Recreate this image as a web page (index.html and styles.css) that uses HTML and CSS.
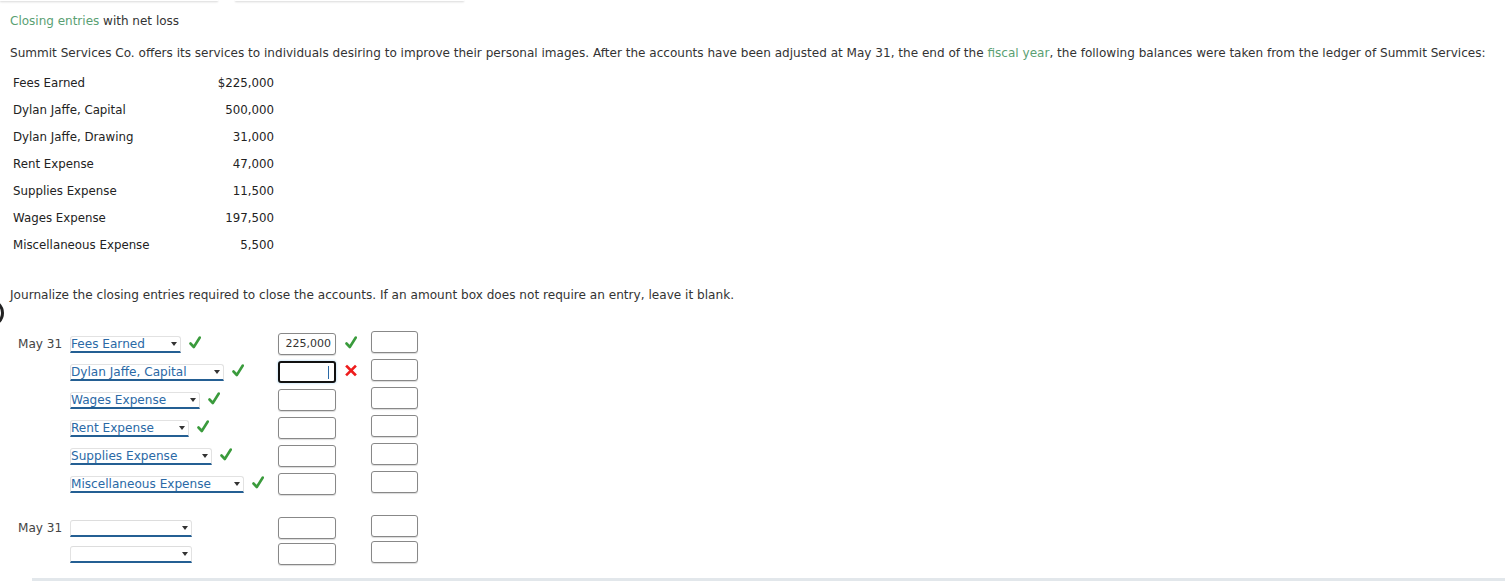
FILE: index.html
```html
<!DOCTYPE html>
<html>
<head>
<meta charset="utf-8">
<link rel="stylesheet" href="styles.css">
</head>
<body>
<div class="tabs"><div class="tab tab1"></div><div class="tab tab2"></div></div>
<div class="page">
  <p class="title"><span class="green">Closing entries</span> with net loss</p>
  <p class="intro">Summit Services Co. offers its services to individuals desiring to improve their personal images. After the accounts have been adjusted at May 31, the end of the <span class="green">fiscal year</span>, the following balances were taken from the ledger of Summit Services:</p>
  <table class="bal">
    <tr><td class="lbl">Fees Earned</td><td class="amt">$225,000</td></tr>
    <tr><td class="lbl">Dylan Jaffe, Capital</td><td class="amt">500,000</td></tr>
    <tr><td class="lbl">Dylan Jaffe, Drawing</td><td class="amt">31,000</td></tr>
    <tr><td class="lbl">Rent Expense</td><td class="amt">47,000</td></tr>
    <tr><td class="lbl">Supplies Expense</td><td class="amt">11,500</td></tr>
    <tr><td class="lbl">Wages Expense</td><td class="amt">197,500</td></tr>
    <tr><td class="lbl">Miscellaneous Expense</td><td class="amt">5,500</td></tr>
  </table>
  <p class="instr">Journalize the closing entries required to close the accounts. If an amount box does not require an entry, leave it blank.</p>
  <div class="bracket"></div>
  <div class="journal">
    <div class="jrow">
      <div class="date">May 31</div>
      <div class="acct"><span class="sel w110">Fees Earned<i class="arr"></i></span><svg class="ok" width="12" height="13" viewBox="0 0 12 13"><path d="M1.5 7.5 L4.8 11 L10.8 1.5" fill="none" stroke="#3a9b3c" stroke-width="2.6" stroke-linecap="round" stroke-linejoin="round"/></svg></div>
      <div class="dr"><span class="box filled">225,000</span><svg class="mark" width="12" height="13" viewBox="0 0 12 13"><path d="M1.5 7.5 L4.8 11 L10.8 1.5" fill="none" stroke="#3a9b3c" stroke-width="2.6" stroke-linecap="round" stroke-linejoin="round"/></svg></div>
      <div class="cr"><span class="box sm"></span></div>
    </div>
    <div class="jrow">
      <div class="date"></div>
      <div class="acct"><span class="sel w153">Dylan Jaffe, Capital<i class="arr"></i></span><svg class="ok" width="12" height="13" viewBox="0 0 12 13"><path d="M1.5 7.5 L4.8 11 L10.8 1.5" fill="none" stroke="#3a9b3c" stroke-width="2.6" stroke-linecap="round" stroke-linejoin="round"/></svg></div>
      <div class="dr"><span class="box focus"><i class="caret"></i></span><svg class="mark" width="12" height="13" viewBox="0 0 12 13"><path d="M2 2.5 L10 10.5 M10 2.5 L2 10.5" fill="none" stroke="#ee1c1c" stroke-width="2.6" stroke-linecap="square"/></svg></div>
      <div class="cr"><span class="box sm"></span></div>
    </div>
    <div class="jrow">
      <div class="date"></div>
      <div class="acct"><span class="sel w129">Wages Expense<i class="arr"></i></span><svg class="ok" width="12" height="13" viewBox="0 0 12 13"><path d="M1.5 7.5 L4.8 11 L10.8 1.5" fill="none" stroke="#3a9b3c" stroke-width="2.6" stroke-linecap="round" stroke-linejoin="round"/></svg></div>
      <div class="dr"><span class="box"></span></div>
      <div class="cr"><span class="box sm"></span></div>
    </div>
    <div class="jrow">
      <div class="date"></div>
      <div class="acct"><span class="sel w118">Rent Expense<i class="arr"></i></span><svg class="ok" width="12" height="13" viewBox="0 0 12 13"><path d="M1.5 7.5 L4.8 11 L10.8 1.5" fill="none" stroke="#3a9b3c" stroke-width="2.6" stroke-linecap="round" stroke-linejoin="round"/></svg></div>
      <div class="dr"><span class="box"></span></div>
      <div class="cr"><span class="box sm"></span></div>
    </div>
    <div class="jrow">
      <div class="date"></div>
      <div class="acct"><span class="sel w141">Supplies Expense<i class="arr"></i></span><svg class="ok" width="12" height="13" viewBox="0 0 12 13"><path d="M1.5 7.5 L4.8 11 L10.8 1.5" fill="none" stroke="#3a9b3c" stroke-width="2.6" stroke-linecap="round" stroke-linejoin="round"/></svg></div>
      <div class="dr"><span class="box"></span></div>
      <div class="cr"><span class="box sm"></span></div>
    </div>
    <div class="jrow">
      <div class="date"></div>
      <div class="acct"><span class="sel w173">Miscellaneous Expense<i class="arr"></i></span><svg class="ok" width="12" height="13" viewBox="0 0 12 13"><path d="M1.5 7.5 L4.8 11 L10.8 1.5" fill="none" stroke="#3a9b3c" stroke-width="2.6" stroke-linecap="round" stroke-linejoin="round"/></svg></div>
      <div class="dr"><span class="box"></span></div>
      <div class="cr"><span class="box sm"></span></div>
    </div>
  </div>
  <div class="journal j2">
    <div class="jrow r2">
      <div class="date">May 31</div>
      <div class="acct"><span class="sel w121 empty"><i class="arr"></i></span></div>
      <div class="dr"><span class="box"></span></div>
      <div class="cr"><span class="box sm"></span></div>
    </div>
    <div class="jrow r2">
      <div class="date"></div>
      <div class="acct"><span class="sel w121 empty"><i class="arr"></i></span></div>
      <div class="dr"><span class="box"></span></div>
      <div class="cr"><span class="box sm"></span></div>
    </div>
  </div>
</div>
<div class="bottombar"></div>
</body>
</html>
```
FILE: styles.css
```css
html, body {
  margin: 0;
  padding: 0;
  background: #fff;
}
body {
  font-family: "DejaVu Sans", Verdana, sans-serif;
  color: #333;
  width: 1505px;
  height: 581px;
  overflow: hidden;
  position: relative;
}
.tabs {
  display: flex;
  gap: 17px;
  height: 1px;
}
.tab {
  height: 1px;
  background: #fff;
  box-shadow: 0 1px 2px rgba(0,0,0,0.22);
}
.tab1 { width: 218px; }
.tab2 { width: 229px; }
.page {
  padding-left: 10px;
  position: relative;
}
.title {
  margin: 12px 0 0;
  font-size: 12px;
  line-height: 16px;
  color: #333;
}
.green { color: #5a9f73; }
.intro {
  margin: 16px 0 0;
  font-size: 12.05px;
  line-height: 16px;
  color: #333;
  white-space: nowrap;
}
.bal {
  border-collapse: collapse;
  margin: 8px 0 0 3px;
  font-size: 11.8px;
  color: #222;
}
.bal td {
  height: 27px;
  padding: 0;
}
.bal .lbl { width: 200px; }
.bal .amt { width: 61px; text-align: right; }
.instr {
  margin: 29px 0 0;
  font-size: 12.1px;
  line-height: 16px;
  color: #333;
}
.bracket {
  position: absolute;
  left: -24px;
  top: 286px;
  width: 22px;
  height: 22px;
  border: 3px solid #222;
  border-radius: 50%;
}
.journal {
  margin-top: 27px;
  padding-left: 8px;
}
.jrow {
  display: flex;
  align-items: center;
  height: 28px;
}
.date {
  width: 52px;
  font-size: 12.1px;
  color: #444;
}
.acct {
  width: 208px;
  display: flex;
  align-items: center;
}
.sel {
  position: relative;
  box-sizing: border-box;
  height: 17px;
  font-size: 12.1px;
  line-height: 14px;
  color: #2a69a6;
  border: 1px solid #e2e2e2;
  border-bottom: 2px solid #245f93;
  border-radius: 3px 3px 0 0;
  white-space: nowrap;
}
.sel.empty { border-top-color: #ddd; }
.arr {
  position: absolute;
  right: 3px;
  top: 5px;
  width: 0;
  height: 0;
  border-left: 3.5px solid transparent;
  border-right: 3.5px solid transparent;
  border-top: 4px solid #333;
}
.w110 { width: 111px; }
.w153 { width: 154px; }
.w129 { width: 130px; }
.w118 { width: 119px; }
.w141 { width: 142px; }
.w173 { width: 174px; }
.w121 { width: 122px; }
.ok {
  margin-left: 8px;
  margin-top: -3px;
}
.dr {
  width: 93px;
  display: flex;
  align-items: center;
}
.box {
  display: inline-block;
  box-sizing: border-box;
  width: 58px;
  height: 22px;
  border: 1px solid #888;
  border-radius: 3px;
  box-shadow: 0 1px 1px rgba(0,0,0,0.15);
  background: #fff;
  font-size: 11px;
  line-height: 20px;
  text-align: right;
  padding-right: 4px;
  color: #333;
  position: relative;
}
.box.sm { width: 47px; }
.box.focus {
  border: 2px solid #111;
  box-shadow: 0 0 2px 1px #d8ecfa;
}
.caret {
  position: absolute;
  right: 5px;
  top: 3px;
  width: 1px;
  height: 13px;
  background: #2a69a6;
}
.mark {
  margin-left: 9px;
  margin-top: -3px;
}
.j2 { margin-top: 17px; }
.r2 { height: 26px; }
.bottombar {
  position: absolute;
  left: 32px;
  right: 0;
  top: 578px;
  height: 4px;
  background: #e2e7eb;
}
```
